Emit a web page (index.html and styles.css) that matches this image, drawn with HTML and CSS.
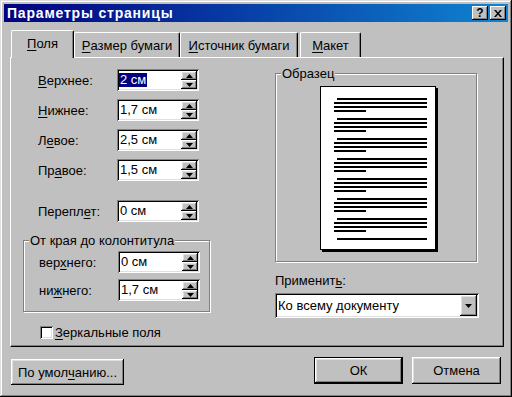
FILE: index.html
```html
<!DOCTYPE html>
<html lang="ru">
<head>
    <meta charset="UTF-8">
    <title>Параметры страницы</title>
    <link rel="stylesheet" href="styles.css">
</head>
<body>
    <div class="window">
        <div class="titlebar">
            <span class="title">Параметры страницы</span>
            <div class="title-buttons">
                <span class="tbtn">?</span>
                <span class="tbtn">
                    <svg width="8" height="7" viewBox="0 0 8 7"><path d="M0 0h2l2 2.5l2-2.5h2l-3 3.5l3 3.5h-2l-2-2.5l-2 2.5h-2l3-3.5z" fill="#000"/></svg>
                </span>
            </div>
        </div>

        <div class="content">
            <div class="tabs">
                <div class="tab active"><u>П</u>оля</div>
                <div class="tab t2"><u>Р</u>азмер бумаги</div>
                <div class="tab t3"><u>И</u>сточник бумаги</div>
                <div class="tab t4"><u>М</u>акет</div>
            </div>

            <div class="panel">
                <div class="left">
                    <div class="row">
                        <span class="label"><u>В</u>ерхнее:</span>
                        <div class="spin"><span class="val"><span class="sel">2 см</span></span><span class="spin-btns"><span class="sbtn"><svg width="7" height="4"><polygon points="0,4 7,4 3.5,0" fill="#000"/></svg></span><span class="sbtn"><svg width="7" height="4"><polygon points="0,0 7,0 3.5,4" fill="#000"/></svg></span></span></div>
                    </div>
                    <div class="row">
                        <span class="label"><u>Н</u>ижнее:</span>
                        <div class="spin"><span class="val">1,7 см</span><span class="spin-btns"><span class="sbtn"><svg width="7" height="4"><polygon points="0,4 7,4 3.5,0" fill="#000"/></svg></span><span class="sbtn"><svg width="7" height="4"><polygon points="0,0 7,0 3.5,4" fill="#000"/></svg></span></span></div>
                    </div>
                    <div class="row">
                        <span class="label">Л<u>е</u>вое:</span>
                        <div class="spin"><span class="val">2,5 см</span><span class="spin-btns"><span class="sbtn"><svg width="7" height="4"><polygon points="0,4 7,4 3.5,0" fill="#000"/></svg></span><span class="sbtn"><svg width="7" height="4"><polygon points="0,0 7,0 3.5,4" fill="#000"/></svg></span></span></div>
                    </div>
                    <div class="row">
                        <span class="label">Пр<u>а</u>вое:</span>
                        <div class="spin"><span class="val">1,5 см</span><span class="spin-btns"><span class="sbtn"><svg width="7" height="4"><polygon points="0,4 7,4 3.5,0" fill="#000"/></svg></span><span class="sbtn"><svg width="7" height="4"><polygon points="0,0 7,0 3.5,4" fill="#000"/></svg></span></span></div>
                    </div>
                    <div class="row gutter">
                        <span class="label">Перепл<u>е</u>т:</span>
                        <div class="spin"><span class="val">0 см</span><span class="spin-btns"><span class="sbtn"><svg width="7" height="4"><polygon points="0,4 7,4 3.5,0" fill="#000"/></svg></span><span class="sbtn"><svg width="7" height="4"><polygon points="0,0 7,0 3.5,4" fill="#000"/></svg></span></span></div>
                    </div>

                    <fieldset class="group headers">
                        <legend>От края до колонтитула</legend>
                        <div class="row">
                            <span class="label">вер<u>х</u>него:</span>
                            <div class="spin"><span class="val">0 см</span><span class="spin-btns"><span class="sbtn"><svg width="7" height="4"><polygon points="0,4 7,4 3.5,0" fill="#000"/></svg></span><span class="sbtn"><svg width="7" height="4"><polygon points="0,0 7,0 3.5,4" fill="#000"/></svg></span></span></div>
                        </div>
                        <div class="row">
                            <span class="label">ни<u>ж</u>него:</span>
                            <div class="spin"><span class="val">1,7 см</span><span class="spin-btns"><span class="sbtn"><svg width="7" height="4"><polygon points="0,4 7,4 3.5,0" fill="#000"/></svg></span><span class="sbtn"><svg width="7" height="4"><polygon points="0,0 7,0 3.5,4" fill="#000"/></svg></span></span></div>
                        </div>
                    </fieldset>

                    <div class="check">
                        <span class="box"></span>
                        <span><u>З</u>еркальные поля</span>
                    </div>
                </div>

                <div class="right">
                    <fieldset class="group sample">
                        <legend>Образец</legend>
                        <div class="page">
                            <div class="para"><i class="ln first"></i><i class="ln"></i><i class="ln"></i><i class="ln short"></i></div>
                            <div class="para"><i class="ln first"></i><i class="ln"></i><i class="ln"></i><i class="ln short"></i></div>
                            <div class="para"><i class="ln first"></i><i class="ln"></i><i class="ln"></i><i class="ln short"></i></div>
                            <div class="para"><i class="ln first"></i><i class="ln"></i><i class="ln"></i><i class="ln short"></i></div>
                            <div class="para"><i class="ln first"></i><i class="ln"></i><i class="ln"></i><i class="ln short"></i></div>
                            <div class="para"><i class="ln first"></i><i class="ln"></i><i class="ln"></i><i class="ln short"></i></div>
                            <div class="para"><i class="ln first"></i><i class="ln"></i><i class="ln"></i><i class="ln short"></i></div>
                            <div class="para"><i class="ln first"></i></div>
                        </div>
                    </fieldset>

                    <div class="apply-label">Применит<u>ь</u>:</div>
                    <div class="select">
                        <span class="select-val">Ко всему документу</span>
                        <span class="drop"><svg width="7" height="4"><polygon points="0,0 7,0 3.5,4" fill="#000"/></svg></span>
                    </div>
                </div>
            </div>

            <div class="buttons">
                <span class="btn defaults">По умол<u>ч</u>анию...</span>
                <div class="btn-group">
                    <span class="btn ok">ОК</span>
                    <span class="btn">Отмена</span>
                </div>
            </div>
        </div>
    </div>
</body>
</html>
```

FILE: styles.css
```css
* {
    box-sizing: border-box;
}
body {
    margin: 0;
    background: #c0c0c0;
    font-family: 'Liberation Sans', Arial, sans-serif;
    font-size: 13px;
    color: #000;
}
u {
    text-decoration-thickness: 1px;
    text-underline-offset: 2px;
}
.window {
    width: 512px;
    height: 397px;
    padding: 4px;
    background: #c0c0c0;
    box-shadow: inset -1px -1px #000, inset 1px 1px #dfdfdf, inset -2px -2px #808080, inset 2px 2px #fff;
    display: flex;
    flex-direction: column;
}
.titlebar {
    height: 18px;
    padding: 0 2px 0 3px;
    background: linear-gradient(to right, #000080, #1084d0);
    display: flex;
    align-items: center;
    justify-content: space-between;
}
.title {
    color: #fff;
    font-weight: bold;
    font-size: 14px;
    letter-spacing: 0.8px;
}
.title-buttons {
    display: flex;
    gap: 2px;
}
.tbtn {
    width: 16px;
    height: 14px;
    background: #c0c0c0;
    box-shadow: inset -1px -1px #000, inset 1px 1px #fff, inset -2px -2px #808080;
    display: flex;
    align-items: center;
    justify-content: center;
    font-weight: bold;
    font-size: 12px;
    line-height: 1;
}

.content {
    flex: 1;
    padding: 8px 4px 0 6px;
    display: flex;
    flex-direction: column;
}

/* tabs */
.tabs {
    height: 27px;
    display: flex;
    align-items: flex-end;
    padding-left: 1px;
}
.tab {
    height: 25px;
    display: flex;
    align-items: center;
    justify-content: center;
    border-top: 1px solid #fff;
    border-left: 1px solid #fff;
    border-right: 1px solid #000;
    border-radius: 2px 2px 0 0;
    box-shadow: inset -1px 0 #808080;
}
.tab.active {
    width: 63px;
    height: 28px;
    margin-bottom: -1px;
    position: relative;
    z-index: 1;
    background: #c0c0c0;
    padding-bottom: 2px;
}
.t2 { width: 106px; }
.t3 { width: 118px; }
.t4 { width: 61px; margin-left: 2px; }

.panel {
    height: 290px;
    padding: 8px 0 0 12px;
    border-top: 1px solid #fff;
    border-left: 1px solid #fff;
    border-right: 1px solid #000;
    border-bottom: 1px solid #000;
    box-shadow: inset -1px -1px #808080;
    display: grid;
    grid-template-columns: 188px 203px;
    column-gap: 64px;
    align-items: start;
}

.left {
    padding-top: 3px;
    display: flex;
    flex-direction: column;
    gap: 8px;
}
.row {
    display: flex;
    align-items: center;
    padding-left: 15px;
}
.label {
    width: 79px;
}
.gutter {
    margin-top: 11px;
}

.spin {
    width: 82px;
    height: 22px;
    padding: 2px;
    background: #fff;
    box-shadow: inset 1px 1px #808080, inset -1px -1px #fff, inset 2px 2px #000, inset -2px -2px #dfdfdf;
    display: flex;
}
.val {
    flex: 1;
    line-height: 18px;
    padding-left: 1px;
}
.sel {
    display: inline-block;
    margin-left: -1px;
    padding: 0 1px;
    line-height: 14px;
    background: #000080;
    color: #fff;
}
.spin-btns {
    width: 16px;
    display: flex;
    flex-direction: column;
}
.sbtn {
    flex: 1;
    background: #c0c0c0;
    box-shadow: inset -1px -1px #000, inset 1px 1px #fff, inset -2px -2px #808080, inset 2px 2px #dfdfdf;
    display: flex;
    align-items: center;
    justify-content: center;
}
.sbtn svg {
    display: block;
}

/* etched group frames */
.group {
    margin: 0;
    padding: 0;
    min-inline-size: 0;
    border: 1px solid #808080;
    box-shadow: inset 1px 1px #fff, 1px 1px #fff;
}
.group legend {
    padding: 0 1px;
    margin-left: 5px;
    line-height: 15px;
    background: #c0c0c0;
}
.headers {
    width: 187px;
    margin-top: 3px;
    padding: 3px 0 10px;
    display: flex;
    flex-direction: column;
    gap: 6px;
}

.check {
    margin-top: 5px;
    padding-left: 17px;
    display: flex;
    align-items: center;
    gap: 2px;
}
.box {
    width: 13px;
    height: 13px;
    background: #fff;
    box-shadow: inset 1px 1px #808080, inset -1px -1px #fff, inset 2px 2px #000, inset -2px -2px #dfdfdf;
}

/* sample */
.sample {
    width: 202px;
    height: 196px;
    padding-top: 5px;
}
.page {
    width: 116px;
    height: 164px;
    margin-left: 44px;
    padding: 11px 8px 0 13px;
    background: #fff;
    border: 1px solid #000;
    box-shadow: 2px 2px #000;
    display: flex;
    flex-direction: column;
    gap: 6px;
}
.para {
    display: flex;
    flex-direction: column;
    gap: 2px;
}
.ln {
    display: block;
    height: 2px;
    background: #000;
}
.ln.first {
    margin-left: 3px;
}
.ln.short {
    width: 32px;
}

.apply-label {
    margin-top: 11px;
    line-height: 15px;
}
.select {
    margin-top: 5px;
    width: 204px;
    height: 25px;
    padding: 2px;
    background: #fff;
    box-shadow: inset 1px 1px #808080, inset -1px -1px #fff, inset 2px 2px #000, inset -2px -2px #dfdfdf;
    display: flex;
    align-items: center;
}
.select-val {
    flex: 1;
    padding-left: 1px;
}
.drop {
    width: 17px;
    height: 21px;
    background: #c0c0c0;
    box-shadow: inset -1px -1px #000, inset 1px 1px #fff, inset -2px -2px #808080, inset 2px 2px #dfdfdf;
    display: flex;
    align-items: center;
    justify-content: center;
}

/* bottom buttons */
.buttons {
    margin-top: 10px;
    padding: 0 3px 0 1px;
    display: flex;
    justify-content: space-between;
    align-items: flex-start;
}
.btn-group {
    display: flex;
    gap: 9px;
}
.btn {
    width: 89px;
    height: 27px;
    background: #c0c0c0;
    box-shadow: inset -1px -1px #000, inset 1px 1px #fff, inset -2px -2px #808080, inset 2px 2px #dfdfdf;
    display: flex;
    align-items: center;
    justify-content: center;
}
.btn.defaults {
    width: 113px;
    height: 26px;
    margin-top: 2px;
}
.btn.ok {
    border: 1px solid #000;
}
```
